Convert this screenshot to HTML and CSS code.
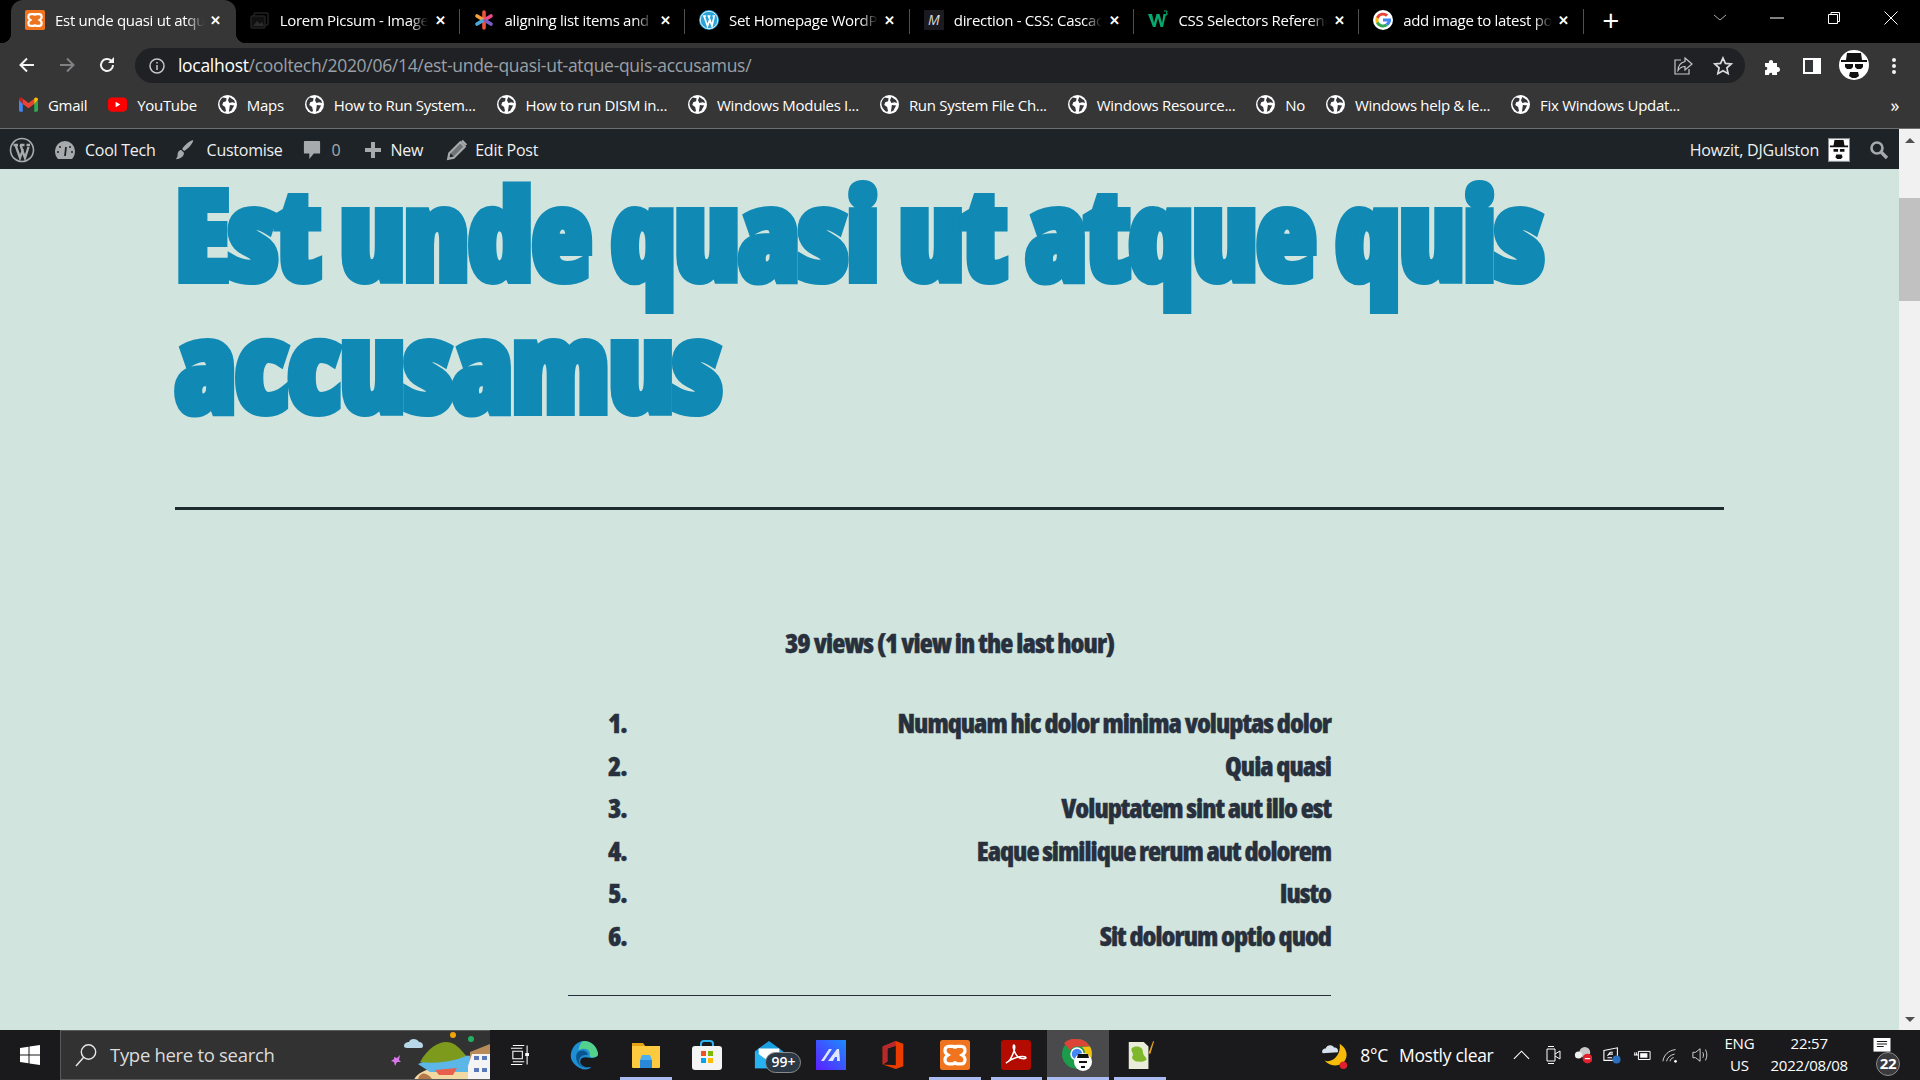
FILE: index.html
```html
<!DOCTYPE html>
<html lang="en">
<head>
  <meta charset="UTF-8" />
  <title>Est unde quasi ut atque quis accusamus</title>
  <link rel="stylesheet" href="styles.css">
</head>
<body>
  <svg class="defs" width="0" height="0">
    <symbol id="globe" viewBox="0 0 20 20">
      <circle cx="10" cy="10" r="10" fill="#fff"/>
      <path d="M5 2.500l4 1-.5 3-3 1-1 3 3 2 1 4.500-2 .5C3 15 1.500 12 1.500 9 1.500 6.500 3 4 5 2.500zM12 2l5 3.500 1 3-3-1-3 1-1.500-3zM12.500 10.500l4.500.5-3 5.500-2.500 1z" fill="#35363a"/>
    </symbol>
    <symbol id="xampp" viewBox="0 0 24 24">
      <rect width="24" height="24" rx="2" fill="#f0741e"/>
      <path d="M7 5h3.500c1.500 0 1.500 2 1.500 2s0-2 1.500-2H17c2 0 3 1.500 3 3.500 0 2-1 2.500-2.500 3.500 1.500 1 2.500 1.500 2.500 3.500S19 19 17 19h-3.500C12 19 12 17 12 17s0 2-1.500 2H7c-2 0-3-1.500-3-3.500S5 13 6.500 12C5 11 4 10.500 4 8.500S5 5 7 5z" fill="none" stroke="#fff" stroke-width="2.600"/>
    </symbol>
    <symbol id="heisenberg" viewBox="0 0 30 30">
      <circle cx="15" cy="15" r="15" fill="#fff"/>
      <path d="M8 3h14l1 7h5v2H2v-2h5z" fill="#111"/>
      <path d="M6 14h8v3l-2 2H8l-2-2zM16 14h8v3l-2 2h-4l-2-2z" fill="#111"/>
      <path d="M11 22h8l1 4-3 2h-4l-3-2z" fill="#111"/>
    </symbol>
  </svg>

  <div class="tabstrip">
    <div class="tab active">
      <svg class="favicon"><use href="#xampp"/></svg>
      <span class="tab-title">Est unde quasi ut atque quis accusamus</span>
      <span class="tab-close">✕</span>
    </div>
    <div class="tab">
      <svg class="favicon" viewBox="0 0 20 20"><rect x="4" y="3" width="14" height="12" rx="1.500" fill="none" stroke="#222" stroke-width="1.500"/><rect x="1" y="6" width="14" height="12" rx="1.500" fill="#111" stroke="#222" stroke-width="1.500"/><path d="M3 16l4-5 3 3 2-2 2 4z" fill="#2c2c2c"/></svg>
      <span class="tab-title">Lorem Picsum - Images</span>
      <span class="tab-close">✕</span>
    </div>
    <div class="tab">
      <svg class="favicon" viewBox="0 0 20 20"><g stroke-width="3.600" stroke-linecap="round"><path d="M10 2v6" stroke="#f0523d"/><path d="M10 12v6" stroke="#f0523d"/><path d="M3 6l5 3" stroke="#f4a03a"/><path d="M17 6l-5 3" stroke="#ee4b8b"/><path d="M3 14l5-3" stroke="#4aa8d8"/><path d="M17 14l-5-3" stroke="#7a5ec8"/></g></svg>
      <span class="tab-title">aligning list items and text</span>
      <span class="tab-close">✕</span>
    </div>
    <div class="tab">
      <svg class="favicon" viewBox="0 0 20 20"><circle cx="10" cy="10" r="10" fill="#2aa3d8"/><circle cx="10" cy="10" r="8.700" fill="none" stroke="#fff" stroke-width=".8"/><path d="M4 6h3M8.500 6h3M13.500 6H16M5 6l3.500 10L11 9M9.500 6l3.500 10L15 7" fill="none" stroke="#fff" stroke-width="1.700"/></svg>
      <span class="tab-title">Set Homepage WordPress</span>
      <span class="tab-close">✕</span>
    </div>
    <div class="tab">
      <span class="favicon mdn">M</span>
      <span class="tab-title">direction - CSS: Cascading</span>
      <span class="tab-close">✕</span>
    </div>
    <div class="tab">
      <svg class="favicon" viewBox="0 0 20 20"><path d="M0 4h4l2 9 2.500-9h3L14 13l1.500-9H18l-3 13h-2.500L10 8l-2.500 9H5z" fill="#04aa6d"/><path d="M16 1h3v1l-1 1h1v2h-3" fill="none" stroke="#04aa6d"/></svg>
      <span class="tab-title">CSS Selectors Reference</span>
      <span class="tab-close">✕</span>
    </div>
    <div class="tab">
      <svg class="favicon" viewBox="0 0 20 20"><circle cx="10" cy="10" r="10" fill="#fff"/><path d="M10 5.500a4.500 4.500 0 0 1 3 1.200l2.200-2.200A8 8 0 0 0 3 7l2.600 2A4.700 4.700 0 0 1 10 5.500z" fill="#ea4335"/><path d="M3 7a8 8 0 0 0 0 6.500L5.600 11.500a4.700 4.700 0 0 1 0-2.500z" fill="#fbbc05"/><path d="M3 13.500a8 8 0 0 0 12 2.200l-2.500-2A4.700 4.700 0 0 1 5.600 11.500z" fill="#34a853"/><path d="M18 8.500H10v3h4.500a4 4 0 0 1-2 2.200l2.500 2A8 8 0 0 0 18 8.500z" fill="#4285f4"/></svg>
      <span class="tab-title">add image to latest post</span>
      <span class="tab-close">✕</span>
    </div>
    <span class="newtab">+</span>
    <div class="winctl">
      <svg class="winbtn" viewBox="0 0 16 16"><path d="M2 5l6 5 6-5" fill="none" stroke="#aaa"/></svg>
      <svg class="winbtn" viewBox="0 0 16 16"><path d="M1 8h14" stroke="#fff"/></svg>
      <svg class="winbtn" viewBox="0 0 16 16"><path d="M2.500 4.500h9v9h-9zM5 4.500V2.500h8.500v9h-2" fill="none" stroke="#fff"/></svg>
      <svg class="winbtn" viewBox="0 0 16 16"><path d="M1.500 1.500l13 13M14.500 1.500l-13 13" stroke="#fff"/></svg>
    </div>
  </div>

  <div class="toolbar">
    <svg class="navbtn" viewBox="0 0 20 20"><path d="M17 10H4M10 3.500L3.500 10l6.500 6.500" fill="none" stroke="#f1f3f4" stroke-width="2"/></svg>
    <svg class="navbtn" viewBox="0 0 20 20"><path d="M3 10h13M10 3.500l6.500 6.500-6.500 6.500" fill="none" stroke="#7f8184" stroke-width="2"/></svg>
    <svg class="navbtn" viewBox="0 0 20 20"><path d="M16 10a6 6 0 1 1-1.800-4.300" fill="none" stroke="#f1f3f4" stroke-width="2"/><path d="M17 2v6h-6z" fill="#f1f3f4"/></svg>
    <div class="omnibox">
      <svg class="info" viewBox="0 0 16 16"><circle cx="8" cy="8" r="7" fill="none" stroke="#c4c7c5" stroke-width="1.500"/><path d="M8 7v5M8 4v1.600" stroke="#c4c7c5" stroke-width="1.500"/></svg>
      <span class="url"><b>localhost</b>/cooltech/2020/06/14/est-unde-quasi-ut-atque-quis-accusamus/</span>
      <svg class="omni-icon" viewBox="0 0 20 20"><path d="M8 4H2v14h14v-5" fill="none" stroke="#c4c7c5" stroke-width="1.200"/><path d="M12 2l7 6-7 6v-3.500c-3 0-5 1-7 4 0-5 3-8 7-9z" fill="none" stroke="#c4c7c5" stroke-width="1.200"/></svg>
      <svg class="omni-icon" viewBox="0 0 20 20"><path d="M10 2l2.400 5.400 5.800.6-4.300 3.900 1.200 5.800L10 14.800l-5.100 2.900 1.200-5.800L1.800 8l5.800-.6z" fill="none" stroke="#dadce0" stroke-width="1.700"/></svg>
    </div>
    <svg class="tool puzzle" viewBox="0 0 20 20"><path d="M2 7h4c-1-4 5-4 4 0h4v4c4-1 4 6 0 5v3H9c1-3-3-3-3 0H2v-5c3 1 3-4 0-3z" fill="#fff"/></svg>
    <svg class="tool sidebar" viewBox="0 0 20 20"><path d="M1 2h18v16H1z" fill="#fff"/><path d="M3 4h8v12H3z" fill="#35363a"/></svg>
    <svg class="profile"><use href="#heisenberg"/></svg>
    <svg class="menu" viewBox="0 0 4 18"><circle cx="2" cy="3" r="2" fill="#f1f3f4"/><circle cx="2" cy="9" r="2" fill="#f1f3f4"/><circle cx="2" cy="15" r="2" fill="#f1f3f4"/></svg>
  </div>

  <div class="bookmarks">
    <span class="mark"><svg class="mark-icon" viewBox="0 0 20 16"><path d="M0 3v11c0 1 .6 1.500 1.500 1.500H4V7z" fill="#4285f4"/><path d="M16 7v8.500h2.500c1 0 1.500-.5 1.500-1.500V3z" fill="#34a853"/><path d="M4 7.500V2l6 4.500L16 2v5.500l-6 4.500z" fill="#ea4335"/><path d="M0 3c0-2.500 2.500-3 4-1.500v6z" fill="#c5221f"/><path d="M16 1.500C17.500 0 20 .5 20 3l-4 4.500z" fill="#fbbc05"/></svg>Gmail</span>
    <span class="mark"><svg class="mark-icon" viewBox="0 0 20 16"><rect width="20" height="15" y=".5" rx="4" fill="#f00"/><path d="M8 5l5 3-5 3z" fill="#fff"/></svg>YouTube</span>
    <span class="mark"><svg class="mark-icon"><use href="#globe"/></svg>Maps</span>
    <span class="mark"><svg class="mark-icon"><use href="#globe"/></svg>How to Run System...</span>
    <span class="mark"><svg class="mark-icon"><use href="#globe"/></svg>How to run DISM in...</span>
    <span class="mark"><svg class="mark-icon"><use href="#globe"/></svg>Windows Modules I...</span>
    <span class="mark"><svg class="mark-icon"><use href="#globe"/></svg>Run System File Ch...</span>
    <span class="mark"><svg class="mark-icon"><use href="#globe"/></svg>Windows Resource...</span>
    <span class="mark"><svg class="mark-icon"><use href="#globe"/></svg>No</span>
    <span class="mark"><svg class="mark-icon"><use href="#globe"/></svg>Windows help &amp; le...</span>
    <span class="mark"><svg class="mark-icon"><use href="#globe"/></svg>Fix Windows Updat...</span>
    <span class="more">»</span>
  </div>

  <div class="viewport">
    <div class="window">
      <div class="adminbar">
        <svg class="wp-logo" viewBox="0 0 26 26"><circle cx="13" cy="13" r="11.500" fill="none" stroke="#a7aaad" stroke-width="1.600"/><path d="M4.500 8h4.500M11 8h4.500M17.500 8H21M6.500 8l4.500 13 3-9M11.500 8l4.500 13 3.500-11" fill="none" stroke="#a7aaad" stroke-width="2.300"/></svg>
        <svg class="bar-icon dash" viewBox="0 0 22 20"><path d="M11 1a10 10 0 0 1 10 10c0 3-1 6-3 8H4c-2-2-3-5-3-8A10 10 0 0 1 11 1z" fill="#a7aaad"/><path d="M11 16l1-9" stroke="#1d2327" stroke-width="1.800"/><circle cx="6" cy="7" r="1" fill="#1d2327"/><circle cx="16" cy="7" r="1" fill="#1d2327"/><circle cx="4" cy="12" r="1" fill="#1d2327"/><circle cx="18" cy="12" r="1" fill="#1d2327"/></svg>
        <span class="bar-text site">Cool Tech</span>
        <svg class="bar-icon brush" viewBox="0 0 22 24"><path d="M21 1c0 4-6 10-10 12l-2-2C11 7 17 2 21 1zM8 12l3 3c0 4-4 7-9 7 2-2 2-3 2-5 0-3 2-5 4-5z" fill="#a7aaad"/></svg>
        <span class="bar-text custom">Customise</span>
        <svg class="bar-icon bubble" viewBox="0 0 20 22"><path d="M2 1h16a1 1 0 0 1 1 1v12a1 1 0 0 1-1 1h-6l-5 6v-6H2a1 1 0 0 1-1-1V2a1 1 0 0 1 1-1z" fill="#a7aaad"/></svg>
        <span class="bar-text count">0</span>
        <svg class="bar-icon plus" viewBox="0 0 18 18"><path d="M7 1h4v6h6v4h-6v6H7v-6H1V7h6z" fill="#a7aaad"/></svg>
        <span class="bar-text new">New</span>
        <svg class="bar-icon pencil" viewBox="0 0 20 20"><path d="M13 3l4 4L7 17l-5 1 1-5zM14.500 1.500l4 4" fill="none" stroke="#a7aaad" stroke-width="2"/><path d="M4 13l9-9 3 3-9 9z" fill="#a7aaad" opacity=".6"/></svg>
        <span class="bar-text edit">Edit Post</span>
        <span class="howzit">Howzit, DJGulston</span>
        <svg class="bar-avatar" viewBox="0 0 22 24"><rect width="22" height="24" fill="#fff"/><path d="M6 1h10l1 6h4v2H1V7h4z" fill="#111"/><path d="M5 11h5v3H5zM12 11h5v3h-5zM8 17h6l1 3-2 2H9l-2-2z" fill="#111"/></svg>
        <svg class="bar-search" viewBox="0 0 20 20"><circle cx="8" cy="8" r="5.500" fill="none" stroke="#a7aaad" stroke-width="2.600"/><path d="M12 12l6 6" stroke="#a7aaad" stroke-width="3.400"/></svg>
      </div>
      <main class="page">
        <h1 class="post-title">Est unde quasi ut atque quis accusamus</h1>
        <hr class="rule-thick">
        <p class="views">39 views (1 view in the last hour)</p>
        <ol class="post-list">
          <li><span>1.</span><span>Numquam hic dolor minima voluptas dolor</span></li>
          <li><span>2.</span><span>Quia quasi</span></li>
          <li><span>3.</span><span>Voluptatem sint aut illo est</span></li>
          <li><span>4.</span><span>Eaque similique rerum aut dolorem</span></li>
          <li><span>5.</span><span>Iusto</span></li>
          <li><span>6.</span><span>Sit dolorum optio quod</span></li>
        </ol>
        <hr class="rule-thin">
      </main>
    </div>
    <div class="scrollbar">
      <span class="arrow up"></span>
      <span class="thumb"></span>
      <span class="arrow down"></span>
    </div>
  </div>

  <div class="taskbar">
    <svg class="start" viewBox="0 0 20 20"><path d="M0 3l8.500-1.300v7.800H0zM9.500 1.500L20 0v9.500H9.500zM0 10.500h8.500v7.800L0 17zM9.500 10.500H20V20L9.500 18.500z" fill="#fff"/></svg>
    <div class="searchbox">
      <svg class="search-glass" viewBox="0 0 22 24"><circle cx="13.500" cy="9" r="7.200" fill="none" stroke="#e6e6e6" stroke-width="1.400"/><path d="M8.500 14.500L1 23" stroke="#e6e6e6" stroke-width="1.500"/></svg>
      <span class="search-text">Type here to search</span>
      <svg class="search-art" viewBox="0 0 100 50">
        <path d="M24 50c4-12 30-16 76-16v16z" fill="#f2d9a4"/>
        <path d="M28 34c20-10 50-10 72-6v14H40z" fill="#5cb6e8"/>
        <path d="M30 32c8-14 18-20 26-20s14 6 20 14c-14 6-30 8-46 6z" fill="#7d9a1c"/>
        <path d="M28 50c0-4 4-8 8-6s6 4 6 6z" fill="#b5774a"/>
        <path d="M45 40l22-2-4 7H49z" fill="#e8604c"/>
        <path d="M14 16c0-3 3-4 5-4 1-4 8-4 10 0 3 0 4 2 4 4s-2 2-4 2H17c-2 0-3-1-3-2z" fill="#b8d8ea"/>
        <path d="M4 27l3 1 3-3-1 5 2 2-4 0-2 4-1-4-3-1 3-2z" fill="#d878e8"/>
        <circle cx="63" cy="5" r="3" fill="#f0a30a"/><circle cx="81" cy="9" r="3" fill="#22b060"/>
        <path d="M80 22l20-8v16H80z" fill="#b98a5a"/>
        <path d="M78 36l4-12h18v26H78z" fill="#f4f4f4"/>
        <path d="M84 26h5v4h-5zM92 26h5v4h-5zM84 38h5v4h-5zM92 38h5v4h-5z" fill="#5a78b8"/>
      </svg>
    </div>
    <svg class="taskview" viewBox="0 0 20 22"><path d="M3 1h12M1 4h12M3 7h10v8H3zM3 18h12M1 21h12M18 1v20" fill="none" stroke="#fff" stroke-width="1.100"/><rect x="16" y="9" width="4" height="3" fill="#fff"/></svg>
    <div class="apps">
      <span class="app"><svg class="app-icon" viewBox="0 0 30 32"><path d="M15 1c8 0 14 6 15 14 0 3-4 5-9 4s-9-1-10 3 4 8 12 7c-4 3-8 3-12 1C4 27 0 21 1 15 2 7 8 1 15 1z" fill="#1e8fd5"/><path d="M15 1c8 0 14 6 15 14 0 4-8 4-9 2 2-7-6-10-12-6 1-5 3-10 6-10z" fill="#54d18b"/><path d="M7 15c3-6 12-4 12 1-3 0-8 0-9 5s3 8 9 8c-9 2-14-7-12-14z" fill="#0b558f"/></svg></span>
      <span class="app on"><svg class="app-icon" viewBox="0 0 30 28"><path d="M1 2h11l3 4H1z" fill="#e4a415"/><path d="M1 5h28v21a1 1 0 0 1-1 1H2a1 1 0 0 1-1-1z" fill="#fdc93f"/><path d="M9 19h12v8H9z" fill="#2a88d8"/><path d="M11 14h8l2 5H9z" fill="#4cb0f0"/></svg></span>
      <span class="app"><svg class="app-icon" viewBox="0 0 30 30"><path d="M9 7V4a3 3 0 0 1 3-3h6a3 3 0 0 1 3 3v3" fill="none" stroke="#2fb4f0" stroke-width="2"/><rect y="6" width="30" height="24" rx="3" fill="#f4f4f4"/><path d="M9 11h5v5H9z" fill="#f25022"/><path d="M16 11h5v5h-5z" fill="#7fba00"/><path d="M9 18h5v5H9z" fill="#00a4ef"/><path d="M16 18h5v5h-5z" fill="#ffb900"/></svg></span>
      <span class="app mail"><svg class="app-icon" viewBox="0 0 30 32"><path d="M15 1l15 11v18H0V12z" fill="#1b9de2"/><path d="M4 9h22v12l-11 5-11-5z" fill="#fff"/><path d="M0 12l15 11 15-11v18H0z" fill="#29b2f0"/></svg><span class="badge">99+</span></span>
      <span class="app"><svg class="app-icon" viewBox="0 0 30 30"><defs><linearGradient id="mtn" x1="0" y1="1" x2="1" y2="0"><stop offset="0" stop-color="#5c1fff"/><stop offset="1" stop-color="#1c8cff"/></linearGradient></defs><rect width="30" height="30" fill="url(#mtn)"/><path d="M5 21l8-12h3l-8 12zM12 21l9-12h2l1 12h-3v-4h-2l-2 4z" fill="#dfe6ff"/></svg></span>
      <span class="app"><svg class="app-icon narrow" viewBox="0 0 24 32"><path d="M15 1l8 3v24l-8 3-14-5 14 1V6L6 9v14l-5 3V7z" fill="#eb3c00"/><path d="M15 1L1 7v19l5-3V9l9-3z" fill="#b8292f"/></svg></span>
      <span class="app on"><svg class="app-icon"><use href="#xampp"/></svg></span>
      <span class="app on"><svg class="app-icon" viewBox="0 0 30 30"><rect width="30" height="30" rx="3" fill="#b30b00"/><path d="M5 23c3-1 6-6 8-12 1-3 1-6 0-6-2 0 0 8 4 12 2 2 7 2 8 1 0-2-6-2-11 0-4 1-9 5-9 5z" fill="none" stroke="#fff" stroke-width="1.500"/></svg></span>
      <span class="app on current"><svg class="app-icon chrome" viewBox="0 0 32 32"><circle cx="15" cy="15" r="15" fill="#1a9c4a"/><path d="M15 0a15 15 0 0 1 13 7.500H15a8 8 0 0 0-7 4L2 4a15 15 0 0 1 13-4z" fill="#db4437"/><path d="M28 7.500A15 15 0 0 1 22 28l-6-6a8 8 0 0 0 4-14z" fill="#f4c20d"/><circle cx="15" cy="15" r="6" fill="#4285f4" stroke="#fff" stroke-width="1.500"/><circle cx="21" cy="23" r="9" fill="#fff"/><path d="M16 15h10l1 4H15zM17 22h8v2h-8zM19 27h4v2h-4z" fill="#111"/></svg></span>
      <span class="app on"><svg class="app-icon" viewBox="0 0 30 32"><path d="M3 2h16l5 5v24H3z" fill="#e8ecd8"/><path d="M6 9c4-4 12-2 12 3s4 6 4 9c-4 3-8 2-10 2S5 20 7 17s-2-4-1-8z" fill="#7fb82a"/><path d="M24 14L29 1l1 .5L26 15z" fill="#e0a020"/></svg></span>
    </div>
    <div class="tray">
      <svg class="weather" viewBox="0 0 30 32"><path d="M20 4c8 5 10 14 4 20-6 5-16 4-20-2 8 3 18-6 16-18z" fill="#f6bb0a"/><path d="M2 14c-2-2 0-5 3-5 1-4 7-5 9-1 3 0 5 2 4 5z" fill="#d8e2ec"/><circle cx="24" cy="27" r="4" fill="#e0202c"/></svg>
      <span class="temp">8°C</span>
      <span class="weather-text">Mostly clear</span>
      <svg class="caret" viewBox="0 0 18 10"><path d="M1 9l8-8 8 8" fill="none" stroke="#fff" stroke-width="1.200"/></svg>
      <svg class="tray-icon" viewBox="0 0 16 20"><path d="M2 4h8v12H2zM10 9l5-3v8l-5-3M3 1.500h6M3 18.500h6" fill="none" stroke="#fff"/></svg>
      <svg class="tray-icon" viewBox="0 0 20 20"><circle cx="12" cy="7" r="6" fill="#c8c8c8"/><circle cx="5" cy="10" r="4" fill="#f0f0f0"/><circle cx="15" cy="14" r="5.500" fill="#e0202c"/><path d="M12 14h6" stroke="#fff" stroke-width="1.400"/></svg>
      <svg class="tray-icon" viewBox="0 0 20 20"><path d="M1 5l15-3v14H1zM5 11l3-4h3M6 9h5M5 13h5" fill="none" stroke="#fff" stroke-width="1.200"/><circle cx="15" cy="15" r="4.500" fill="#2a70c0"/></svg>
      <svg class="tray-icon" viewBox="0 0 20 20"><path d="M6 6h13v9H6zM1 10h5M2 7v3M4 7v3" fill="none" stroke="#fff" stroke-width="1.100"/><rect x="8" y="8" width="8" height="5" fill="#fff"/></svg>
      <svg class="tray-icon" viewBox="0 0 20 20"><path d="M1 17c1-7 6-12 14-13M5 17c1-4 4-7 9-8M9 17c0-2 2-4 4-4" fill="none" stroke="#d0d0d0" stroke-width="1.100"/><circle cx="15" cy="17" r="1.500" fill="#fff"/></svg>
      <svg class="tray-icon" viewBox="0 0 20 20"><path d="M1 7h3l5-4v14l-5-4H1zM12 7c1 2 1 4 0 6M15 4c2 4 2 8 0 12" fill="none" stroke="#d0d0d0" stroke-width="1.100"/></svg>
      <div class="lang"><span>ENG</span><span>US</span></div>
      <div class="clock"><span>22:57</span><span>2022/08/08</span></div>
      <div class="notify">
        <svg class="notify-icon" viewBox="0 0 20 20"><path d="M0 0h20v16H0z" fill="#fff"/><path d="M4 4h12M4 7h12M4 10h8" stroke="#1a1a1d" stroke-width="1.200"/></svg>
        <span class="notify-count">22</span>
      </div>
    </div>
  </div>
</body>
</html>
```
FILE: styles.css
```css
* { box-sizing: border-box; }
html, body { height: 100%; }
body {
  margin: 0;
  display: flex;
  flex-direction: column;
  overflow: hidden;
  font-family: "Open Sans", "Noto Sans", sans-serif;
  font-stretch: 88%;
  color: #fff;
  background: #000;
}
.defs { position: absolute; }

/* browser tabs */
.tabstrip {
  height: 43px;
  flex: none;
  display: flex;
  align-items: flex-start;
  padding-left: 11px;
  background: #000;
}
.tab {
  width: 224.700px;
  height: 43px;
  flex: none;
  display: flex;
  align-items: center;
  padding: 0 10px 3px 14px;
  position: relative;
  font-size: 15px;
  letter-spacing: -.3px;
}
.tab::after {
  content: "";
  position: absolute;
  right: 0;
  top: 9px;
  height: 25px;
  width: 1px;
  background: #505050;
}
.tab.active {
  background: #363636;
  border-radius: 12px 12px 0 0;
}
.tab.active::before,
.tab.active::after {
  content: "";
  position: absolute;
  top: auto;
  bottom: 0;
  width: 10px;
  height: 10px;
}
.tab.active::before {
  left: -10px;
  background: radial-gradient(circle at 0 0, #000 10px, #363636 10.500px);
}
.tab.active::after {
  right: -10px;
  background: radial-gradient(circle at 100% 0, #000 10px, #363636 10.500px);
}
.favicon {
  width: 20px;
  height: 20px;
  flex: none;
  margin-right: 10px;
}
.mdn {
  background: #1b1b1f;
  color: #d8d8d8;
  font-size: 14px;
  font-style: italic;
  text-align: center;
  line-height: 20px;
}
.tab-title {
  flex: 1;
  min-width: 0;
  white-space: nowrap;
  overflow: hidden;
  -webkit-mask-image: linear-gradient(90deg, #000 88%, transparent);
  mask-image: linear-gradient(90deg, #000 88%, transparent);
}
.tab-close {
  flex: none;
  width: 20px;
  margin-left: 2px;
  font-size: 13px;
  font-weight: 700;
  text-align: center;
}
.newtab {
  margin-left: 15px;
  width: 24px;
  font-size: 30px;
  line-height: 40px;
  text-align: center;
}
.winctl {
  margin-left: auto;
  display: flex;
  align-items: center;
  height: 36px;
  padding-right: 21px;
  gap: 41px;
}
.winbtn { width: 16px; height: 16px; }

/* address bar */
.toolbar {
  height: 40px;
  flex: none;
  display: flex;
  align-items: flex-end;
  background: #363636;
  padding-left: 17px;
}
.navbtn {
  width: 20px;
  height: 20px;
  margin: 0 20px 8px 0;
  flex: none;
}
.omnibox {
  width: 1610px;
  height: 35px;
  margin-left: -2px;
  flex: none;
  display: flex;
  align-items: center;
  background: #202124;
  border-radius: 18px;
  padding: 0 12px 0 14px;
}
.info { width: 16px; height: 16px; margin-right: 13px; flex: none; }
.url {
  flex: 1;
  font-size: 17.500px;
  letter-spacing: -.3px;
  color: #9aa0a6;
  white-space: nowrap;
  padding-bottom: 1px;
}
.url b { color: #fff; font-weight: 400; }
.omni-icon { width: 20px; height: 20px; margin-left: 20px; flex: none; }
.tool { width: 20px; height: 20px; flex: none; margin-bottom: 7px; }
.puzzle { margin-left: 18px; }
.sidebar { margin-left: 19px; }
.profile { width: 30px; height: 30px; margin: 0 0 3px 17px; flex: none; }
.menu { width: 4px; height: 18px; margin: 0 0 8px 23px; flex: none; }

/* bookmarks */
.bookmarks {
  height: 46px;
  flex: none;
  display: flex;
  align-items: center;
  gap: 21px;
  background: #363636;
  border-bottom: 1px solid #6e6e6e;
  padding: 0 0 2px 19px;
  font-size: 15px;
  letter-spacing: -.3px;
  white-space: nowrap;
}
.mark { display: flex; align-items: center; gap: 10px; }
.mark-icon { width: 19px; height: 19px; flex: none; }
.more { margin-left: auto; padding-right: 21px; font-size: 18px; }

/* wordpress admin bar and page */
.viewport { flex: 1; min-height: 0; display: flex; }
.window { flex: 1; min-width: 0; display: flex; flex-direction: column; }
.adminbar {
  height: 40px;
  flex: none;
  display: flex;
  align-items: center;
  background: #1d2327;
  color: #f0f0f1;
  padding: 1px 0 0 9px;
  font-size: 16px;
  letter-spacing: -.25px;
  white-space: nowrap;
}
.wp-logo { width: 26px; height: 26px; flex: none; margin-right: 19px; }
.bar-icon { width: 22px; height: 22px; flex: none; }
.bar-text { margin-left: 9px; }
.site { margin-right: 17px; }
.custom { margin-left: 12px; margin-right: 20px; }
.bubble { width: 18px; }
.count { color: #a7aaad; margin-left: 11px; margin-right: 23px; }
.plus { width: 18px; }
.new { margin-right: 22px; }
.pencil { width: 24px; }
.edit { margin-left: 6px; }
.howzit { margin-left: auto; margin-right: 9px; }
.bar-avatar { width: 22px; height: 24px; border: 1px solid #8c8f94; flex: none; margin-right: 19px; }
.bar-search { width: 20px; height: 20px; flex: none; margin-right: 10px; }

.page {
  flex: 1;
  min-height: 0;
  overflow: hidden;
  background: #d1e4dd;
  color: #28303d;
  padding: 0 175px;
}
.post-title {
  margin: -3px 0 77px;
  font-size: 124px;
  line-height: 132px;
  font-weight: 800;
  font-stretch: 75%;
  letter-spacing: -1.300px;
  color: #1089b4;
  -webkit-text-stroke: 8px #1089b4;
}
.rule-thick {
  margin: 0;
  height: 3px;
  border: 0;
  background: #1f2a2e;
}
.views {
  margin: 117px 0 43px;
  font-size: 27px;
  line-height: 32px;
  font-weight: 800;
  font-stretch: 75%;
  text-align: center;
  letter-spacing: -.9px;
  -webkit-text-stroke: .4px #28303d;
}
.post-list {
  list-style: none;
  width: 763px;
  margin: 0 auto 37px;
  padding: 0 0 0 40px;
}
.post-list li {
  height: 42.600px;
  line-height: 42.600px;
  display: flex;
  justify-content: space-between;
  font-size: 27px;
  font-weight: 800;
  font-stretch: 75%;
  letter-spacing: -1px;
  -webkit-text-stroke: .4px #28303d;
}
.rule-thin {
  width: 763px;
  height: 1px;
  margin: 0 auto;
  border: 0;
  background: #28303d;
}

/* scrollbar */
.scrollbar {
  width: 21px;
  flex: none;
  display: flex;
  flex-direction: column;
  background: #f1f1f1;
}
.arrow {
  flex: none;
  margin: 0 auto;
  width: 0;
  border: 5px solid transparent;
}
.arrow.up { border-bottom: 5px solid #505050; border-top: 0; height: 0; margin-top: 9px; }
.arrow.down { border-top: 5px solid #505050; border-bottom: 0; height: 0; margin-top: auto; margin-bottom: 8px; }
.thumb { height: 103px; margin-top: 55px; background: #c1c1c1; flex: none; }

/* windows taskbar */
.taskbar {
  height: 50px;
  flex: none;
  display: flex;
  align-items: center;
  background: #1a1a1d;
  padding-left: 20px;
}
.start { width: 20px; height: 20px; flex: none; }
.searchbox {
  width: 430px;
  height: 50px;
  margin-left: 20px;
  flex: none;
  display: flex;
  align-items: center;
  background: #323232;
  border: 1px solid #5a5a5a;
  border-right: 0;
  padding-left: 14px;
  overflow: hidden;
}
.search-glass { width: 22px; height: 24px; flex: none; margin-right: 13px; }
.search-text { font-size: 18.500px; letter-spacing: -.3px; color: #dcdcdc; flex: 1; white-space: nowrap; padding-bottom: 2px; }
.search-art { width: 100px; height: 50px; flex: none; }
.taskview { width: 19px; height: 22px; flex: none; margin-left: 20px; }
.apps { display: flex; align-items: stretch; height: 50px; margin-left: 24px; }
.app {
  width: 61.800px;
  flex: none;
  display: flex;
  align-items: center;
  justify-content: center;
  position: relative;
}
.app.on::after {
  content: "";
  position: absolute;
  left: 0;
  right: 0;
  bottom: 0;
  height: 3px;
  background: #a9bbf0;
  margin: 0 5px;
}
.app.current { background: #4a4a4c; }
.app.current::after { margin: 0; }
.app-icon { width: 30px; height: 30px; }
.app-icon.narrow { width: 24px; }
.app-icon.chrome { width: 32px; height: 32px; }
.badge {
  position: absolute;
  left: 27px;
  top: 22px;
  width: 36px;
  height: 21px;
  border: 1px solid #8a8a8a;
  border-radius: 11px;
  background: #2c3844;
  font-size: 14px;
  font-weight: 600;
  line-height: 18px;
  text-align: center;
}
.tray {
  margin-left: auto;
  display: flex;
  align-items: center;
  height: 50px;
  padding-right: 17px;
  font-size: 17.500px;
  letter-spacing: -.3px;
  white-space: nowrap;
}
.weather { width: 28px; height: 30px; flex: none; margin-right: 11px; }
.temp { margin-right: 11px; }
.caret { width: 17px; height: 10px; flex: none; margin: 0 14px 0 20px; }
.tray-icon { width: 18px; height: 20px; flex: none; margin-right: 11.500px; }
.lang, .clock {
  display: flex;
  flex-direction: column;
  align-items: center;
  font-size: 15px;
  letter-spacing: -.2px;
  line-height: 22px;
  padding-bottom: 2px;
}
.lang { margin-left: 3px; }
.clock { margin-left: 16px; }
.notify { margin-left: 24px; width: 31px; height: 42px; position: relative; }
.notify-icon { width: 20px; height: 17px; display: block; margin-top: 4px; }
.notify-count {
  position: absolute;
  right: 3px;
  bottom: 0;
  width: 24px;
  height: 24px;
  border: 1px solid #8a8a8a;
  border-radius: 50%;
  background: #3a3a3d;
  font-size: 15px;
  font-weight: 700;
  line-height: 21px;
  text-align: center;
}
```
